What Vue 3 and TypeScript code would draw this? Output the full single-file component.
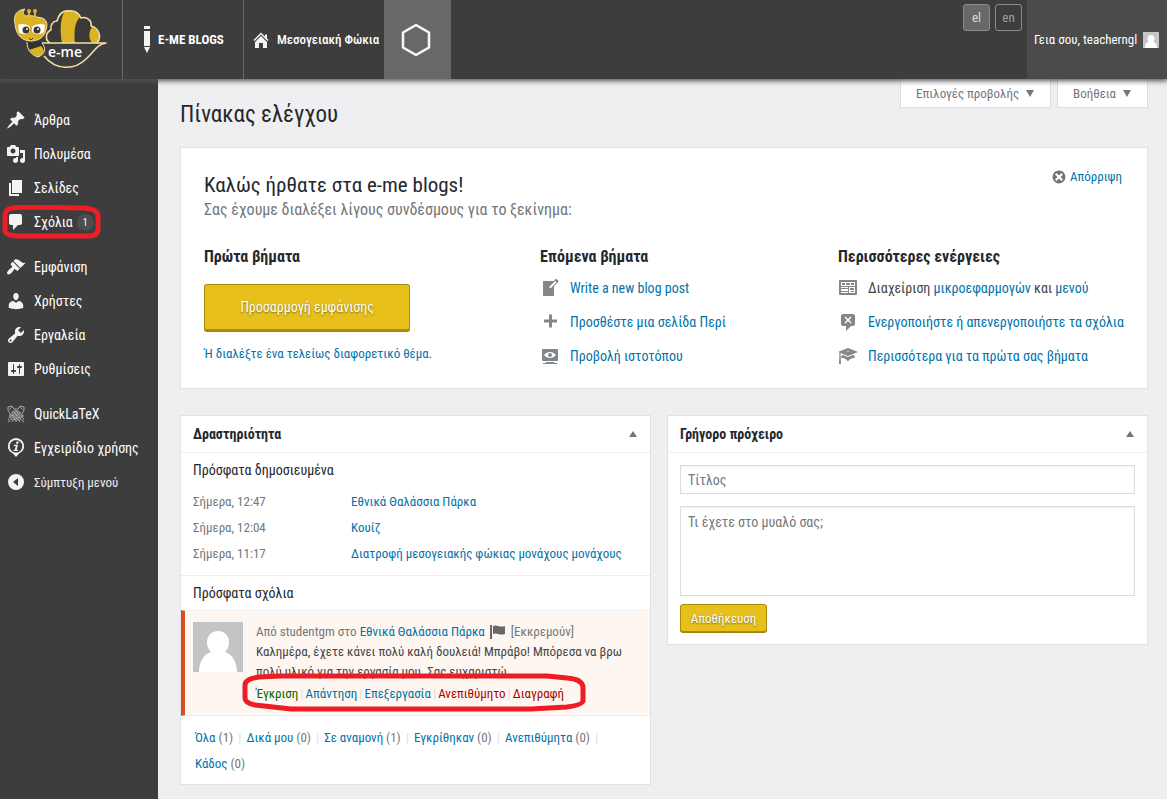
<script setup lang="ts">
import { ref } from 'vue'

interface MenuItem {
  label: string
  icon: string
  count?: number
}

const icons: Record<string, string> = {
  pin: 'M10.44 3.02l1.82-1.82 6.36 6.35-1.83 1.82c-1.05-.68-2.48-.57-3.41.36l-.75.75c-.92.93-1.04 2.35-.35 3.41l-1.83 1.82-2.41-2.41-2.8 2.79c-.42.42-3.38 2.71-3.8 2.29s1.86-3.39 2.28-3.81l2.79-2.79L4.1 9.36l1.83-1.82c1.05.69 2.48.57 3.4-.36l.75-.75c.93-.92 1.05-2.35.36-3.41z',
  media: 'M13 11V4c0-.55-.45-1-1-1h-1.67L9 1H5L3.67 3H2c-.55 0-1 .45-1 1v7c0 .55.45 1 1 1h10c.55 0 1-.45 1-1zM7 4.5c1.38 0 2.5 1.12 2.5 2.5S8.38 9.5 7 9.5 4.5 8.38 4.5 7 5.62 4.5 7 4.5zM14 6h5v10.5c0 1.38-1.12 2.5-2.5 2.5S14 17.88 14 16.5s1.12-2.5 2.5-2.5c.17 0 .34.02.5.05V9h-3V6zm-4 8.05V13h2v3.5c0 1.38-1.12 2.5-2.5 2.5S7 17.88 7 16.5 8.12 14 9.5 14c.17 0 .34.02.5.05z',
  page: 'M6 15V2h10v13H6zm-1 1h8v2H3V5h2v11z',
  comment: 'M5 2h9c1.1 0 2 .9 2 2v7c0 1.1-.9 2-2 2h-2l-5 5v-5H5c-1.1 0-2-.9-2-2V4c0-1.1.9-2 2-2z',
  brush: 'M14.48 11.06L7.41 3.99l1.5-1.5c.5-.56 2.3-.47 3.51.32 1.21.8 1.43 1.28 2.91 2.1 1.18.64 2.45 1.26 4.45.85zm-.71.71L6.7 4.7 4.93 6.47c-.39.39-.39 1.02 0 1.41l1.06 1.06c.39.39.39 1.03 0 1.42-.6.6-1.43 1.11-2.21 1.69-.35.26-.7.53-1.01.84C1.43 14.23.4 16.08 1.4 17.07c.99 1 2.84-.03 4.18-1.36.31-.31.58-.66.85-1.02.57-.78 1.08-1.61 1.69-2.21.39-.39 1.02-.39 1.41 0l1.06 1.06c.39.39 1.02.39 1.41 0z',
  user: 'M10 9.25c-2.27 0-2.73-3.44-2.73-3.44C7 4.02 7.82 2 9.97 2c2.16 0 2.98 2.02 2.71 3.81 0 0-.41 3.44-2.68 3.44zm0 2.57L12.72 10c2.39 0 4.52 2.33 4.52 4.53v2.49s-3.65 1.13-7.24 1.13c-3.65 0-7.24-1.13-7.24-1.13v-2.49c0-2.25 1.94-4.48 4.47-4.48z',
  wrench: 'M16.68 9.77c-1.34 1.34-3.3 1.67-4.95.99l-5.41 6.52c-.99.99-2.59.99-3.58 0s-.99-2.59 0-3.57l6.52-5.42c-.68-1.65-.35-3.61.99-4.95 1.28-1.28 3.12-1.62 4.72-1.06l-2.89 2.89 2.82 2.82 2.86-2.87c.53 1.58.18 3.39-1.08 4.65zM3.81 16.21c.4.39 1.04.39 1.43 0 .4-.4.4-1.04 0-1.43-.39-.4-1.03-.4-1.43 0-.39.39-.39 1.03 0 1.43z',
  sliders: 'M18 16V4c0-.55-.45-1-1-1H3c-.55 0-1 .45-1 1v12c0 .55.45 1 1 1h14c.55 0 1-.45 1-1zM8 11h1c.55 0 1 .45 1 1s-.45 1-1 1H8v1.5c0 .28-.22.5-.5.5s-.5-.22-.5-.5V13H6c-.55 0-1-.45-1-1s.45-1 1-1h1V5.5c0-.28.22-.5.5-.5s.5.22.5.5V11zm5-2h-1c-.55 0-1-.45-1-1s.45-1 1-1h1V5.5c0-.28.22-.5.5-.5s.5.22.5.5V7h1c.55 0 1 .45 1 1s-.45 1-1 1h-1v5.5c0 .28-.22.5-.5.5s-.5-.22-.5-.5V9z',
  info: 'M10 0a8 8 0 0 0-8 8.500c0 4 2.500 5.500 5 7L10 19l3-3.500c2.500-1.500 5-3 5-7A8 8 0 0 0 10 0zm0 2a6.300 6.300 0 1 1 0 12.600A6.300 6.300 0 0 1 10 2zM10.500 3.500h2.200l-.5 2.200H10zM8 6.700h4l-1.300 5h1.400l-.3 1.200H7.500l.3-1.200h1L9.800 7.900H7.700z',
  collapse: 'M10 2a8 8 0 1 1 0 16 8 8 0 0 1 0-16zM7 10l5 4V6z',
  home: 'M16 8.500l1.530 1.530-1.060 1.060L10 4.600l-6.470 6.490-1.060-1.060L10 2.500l4 4v-2h2zm-6-2.460l6 5.990V18h-4v-5H8v5H4v-5.970z',
  write: 'M16.89 1.2l1.41 1.41c.39.39.39 1.02 0 1.41L14 8.33V18H3V3h10.67l1.8-1.8c.4-.39 1.03-.4 1.42 0zm-5.66 8.48l5.37-5.36-1.42-1.42-5.36 5.37-.71 2.12z',
  plus: 'M17 7.500v3h-5v5H9v-5H4v-3h5v-5h3v5z',
  view: 'M18 14V4c0-.55-.45-1-1-1H3c-.55 0-1 .45-1 1v10c0 .55.45 1 1 1h14c.55 0 1-.45 1-1zm-8-8c2.300 0 4.400 1.140 6 3-1.600 1.860-3.700 3-6 3s-4.400-1.140-6-3c1.600-1.860 3.700-3 6-3zm2 3c0-1.100-.9-2-2-2s-2 .9-2 2 .9 2 2 2 2-.9 2-2zm2 8h3v1H3v-1h3v-1h8z',
  widgets: 'M2 2h16a1 1 0 0 1 1 1v13a1 1 0 0 1-1 1H2a1 1 0 0 1-1-1V3a1 1 0 0 1 1-1zM3 4v4h14V4zM4 5h3v2H4zM8 5h4v2H8zM13 5h3v2h-3zM3 9v1h7V9zM3 11v2h7v-2zM3 14v1h7v-1zM11 9v6h6V9zM12 10h4v2h-4zM13 13h3v1h-3z',
  commentOff: 'M5 2h10c1.100 0 2 .9 2 2v8c0 1.100-.9 2-2 2h-2l-5 5v-5H5c-1.100 0-2-.9-2-2V4c0-1.100.9-2 2-2zm8.500 8.500L11 8l2.500-2.500-1-1L10 7 7.500 4.500l-1 1L9 8l-2.500 2.500 1 1L10 9l2.500 2.500z',
  learn: 'M10 10L2.540 7.020 3 18H1l.48-11.410L0 6l10-4 10 4zm0-5c-.55 0-1 .22-1 .5s.45.5 1 .5 1-.22 1-.5-.45-.5-1-.5zm0 6l5.570-2.230c.71.94 1.200 2.070 1.360 3.300-.3-.04-.61-.07-.93-.07-2.550 0-4.780 1.370-6 3.410-1.220-2.040-3.450-3.410-6-3.410-.32 0-.63.03-.93.07.16-1.230.65-2.360 1.360-3.300z',
  dismiss: 'M10 2c4.420 0 8 3.580 8 8s-3.580 8-8 8-8-3.580-8-8 3.580-8 8-8zm5 11l-3-3 3-3-2-2-3 3-3-3-2 2 3 3-3 3 2 2 3-3 3 3z',
}

const menu: MenuItem[][] = [
  [
    { label: 'Άρθρα', icon: 'pin' },
    { label: 'Πολυμέσα', icon: 'media' },
    { label: 'Σελίδες', icon: 'page' },
    { label: 'Σχόλια', icon: 'comment', count: 1 },
  ],
  [
    { label: 'Εμφάνιση', icon: 'brush' },
    { label: 'Χρήστες', icon: 'user' },
    { label: 'Εργαλεία', icon: 'wrench' },
    { label: 'Ρυθμίσεις', icon: 'sliders' },
  ],
  [
    { label: 'QuickLaTeX', icon: 'koala' },
    { label: 'Εγχειρίδιο χρήσης', icon: 'info' },
  ],
]

const nextSteps = [
  { label: 'Write a new blog post', icon: 'write' },
  { label: 'Προσθέστε μια σελίδα Περί', icon: 'plus' },
  { label: 'Προβολή ιστοτόπου', icon: 'view' },
]

const published = [
  { time: 'Σήμερα, 12:47', title: 'Εθνικά Θαλάσσια Πάρκα' },
  { time: 'Σήμερα, 12:04', title: 'Κουίζ' },
  { time: 'Σήμερα, 11:17', title: 'Διατροφή μεσογειακής φώκιας μονάχους μονάχους' },
]

const actions = [
  { label: 'Έγκριση', tone: 'approve' },
  { label: 'Απάντηση', tone: '' },
  { label: 'Επεξεργασία', tone: '' },
  { label: 'Ανεπιθύμητο', tone: 'danger' },
  { label: 'Διαγραφή', tone: 'danger' },
]

const filters = [
  { label: 'Όλα', count: 1 },
  { label: 'Δικά μου', count: 0 },
  { label: 'Σε αναμονή', count: 1 },
  { label: 'Εγκρίθηκαν', count: 0 },
  { label: 'Ανεπιθύμητα', count: 0 },
  { label: 'Κάδος', count: 0 },
]

const title = ref('')
const body = ref('')
</script>

<template>
  <div class="page">
    <header class="topbar">
      <a class="logo" href="#" aria-label="e-me">
        <svg width="96" height="64" viewBox="0 0 96 64">
          <path d="M37 36C32 33 32 26 38 23C37 18 40 14 44 14C46 7 50 3 56 4C61 3 66 6 68 11C74 9 79 14 78 19C86 21 89 30 84 36Z" fill="#3b3836" />
          <path d="M51 5C56 2 63 4 67 10C61 16 61 26 62 36H49C47 25 47 14 51 5Z" fill="#dbb426" />
          <path d="M79 20C86 23 88 30 84 36H79C75 31 76 24 79 20Z" fill="#dbb426" />
          <g fill="none" stroke="#f3dfa6" stroke-width="1.600" stroke-linejoin="round">
            <path d="M37 36C32 33 32 26 38 23C37 18 40 14 44 14C46 7 50 3 56 4C61 3 66 6 68 11C74 9 79 14 78 19C86 21 89 30 84 36" />
            <path d="M29 36H93C84 37 80 46 73 52C62 63 43 64 31 49" />
          </g>
          <path d="M14 35C18 33 24 34 29 36L31 42L23 44C18 42 14 39 14 35Z" fill="#35332f" />
          <path d="M16 43L28 39C32 43 32 47 25 50C21 48 18 46 16 43Z" fill="#dbb426" />
          <path d="M14 35C14 43 18 48 25 50C33 47 33 41 29 36" fill="none" stroke="#f3dfa6" stroke-width="1" />
          <path d="M2 17C0 8 4 3 12 2C9 5 10 8 13 9C17 8 20 9 24 10L29 11C35 13 35 19 32 26C30 31 24 34 18 34C10 34 3 29 2 17Z" fill="#dbb426" stroke="#f3dfa6" stroke-width="1" />
          <path d="M16 11V4M22 11V4" stroke="#dbb426" stroke-width="2" />
          <circle cx="16" cy="4" r="2" fill="#dbb426" /><circle cx="22" cy="4" r="2" fill="#dbb426" />
          <path d="M5 18C9 16 14 17 17 20V24C16 28 8 28 6 25Z" fill="#fff" />
          <path d="M19 20C22 17 28 16 32 18L31 25C28 28 20 28 19 24Z" fill="#fff" />
          <circle cx="13" cy="23" r="3.500" fill="#3b3836" /><circle cx="24" cy="23" r="3.500" fill="#3b3836" />
          <circle cx="14" cy="22" r="1" fill="#fff" /><circle cx="25" cy="22" r="1" fill="#fff" />
          <path d="M16 31l2 2 2-2" fill="none" stroke="#3b3836" />
          <text x="52" y="50" text-anchor="middle" class="logo-text">e-me</text>
        </svg>
      </a>
      <a class="top-item brand" href="#">
        <svg width="8" height="27" viewBox="0 0 8 27" fill="#f5f5f5"><path d="M1 0h6v3H1zM1 5h6v15H1zM1 21h6l-3 6z" /></svg>
        <span>E-ME BLOGS</span>
      </a>
      <a class="top-item site" href="#">
        <svg width="20" height="20" viewBox="0 0 20 20" fill="#f5f5f5"><path :d="icons.home" /></svg>
        <span>Μεσογειακή Φώκια</span>
      </a>
      <button class="hex" type="button" aria-label="Εφαρμογές">
        <svg width="34" height="34" viewBox="0 0 34 34"><path d="M17 2L30 9.500V24.500L17 32L4 24.500V9.500Z" fill="none" stroke="#fafafa" stroke-width="2.500" stroke-linejoin="round" /></svg>
      </button>
      <div class="langs">
        <button type="button" class="lang current">el</button>
        <button type="button" class="lang">en</button>
      </div>
      <a class="account" href="#">
        <span>Γεια σου, teacherngl</span>
        <svg width="16" height="16" viewBox="0 0 50 50"><path fill="#c6c6c6" d="M0 0h50v50H0z" /><path fill="#fff" d="M25 9c7 0 11 5 11 11 0 5-2 8-5 10 8 3 13 10 13 20H6c0-10 5-17 13-20-3-2-5-5-5-10C14 14 18 9 25 9z" /></svg>
      </a>
    </header>

    <div class="frame">
      <nav class="sidebar">
        <ul v-for="(group, g) in menu" :key="g">
          <li v-for="item in group" :key="item.label">
            <a href="#" class="menu-link">
              <svg v-if="item.icon === 'koala'" width="20" height="20" viewBox="0 0 20 20" fill="none" stroke="#aaa8a6" stroke-width="1">
                <path d="M5 9C6 5 14 5 15 9L16 13C14 18 6 18 4 13Z" fill="#777" stroke="none" />
                <path d="M2 3l4-1 2 3h4l2-3 4 1v4l-2 2v4l2 3M2 3v4l2 2v4l-2 3M6 7l3 2 2 3 3-4M5 11l3 1 1 4 3-3 3 1M6 18l2-3M14 18l-2-3M3 12h2M15 12h3M9 6l3 2M6 15l-4 3M14 15l4 3M10 18v-2" />
                <path d="M3 6l3-3M14 3l3 3" stroke="#b98d72" />
              </svg>
              <svg v-else width="20" height="20" viewBox="0 0 20 20" fill="#f3f3f3" fill-rule="evenodd"><path :d="icons[item.icon]" /></svg>
              <span>{{ item.label }}</span>
              <span v-if="item.count" class="count">{{ item.count }}</span>
              <svg v-if="item.count" class="mark mark-menu" width="100" height="36" viewBox="0 0 100 36" aria-hidden="true">
                <path d="M11 3L22 2L82 3Q96 4 96 11V24Q96 31 86 31L14 31Q3 30 3 25V10Q3 4 11 3Z" />
              </svg>
            </a>
          </li>
          <li v-if="g === menu.length - 1">
            <button type="button" class="menu-link collapse">
              <svg width="20" height="20" viewBox="0 0 20 20" fill="#f3f3f3" fill-rule="evenodd"><path :d="icons.collapse" /></svg>
              <span>Σύμπτυξη μενού</span>
            </button>
          </li>
        </ul>
      </nav>

      <main class="content">
        <div class="heading-row">
          <h1>Πίνακας ελέγχου</h1>
          <div class="tabs">
            <button type="button">Επιλογές προβολής <i class="down" /></button>
            <button type="button">Βοήθεια <i class="down" /></button>
          </div>
        </div>

        <section class="card welcome">
          <a class="dismiss" href="#">
            <svg width="16" height="16" viewBox="0 0 20 20" fill="#6f7479" fill-rule="evenodd"><path :d="icons.dismiss" /></svg>Απόρριψη
          </a>
          <h2>Καλώς ήρθατε στα e-me blogs!</h2>
          <p class="about">Σας έχουμε διαλέξει λίγους συνδέσμους για το ξεκίνημα:</p>
          <div class="columns">
            <div>
              <h3>Πρώτα βήματα</h3>
              <button type="button" class="primary hero">Προσαρμογή εμφάνισης</button>
              <p class="alt"><a href="#">Ή διαλέξτε ένα τελείως διαφορετικό θέμα.</a></p>
            </div>
            <div>
              <h3>Επόμενα βήματα</h3>
              <ul class="steps">
                <li v-for="s in nextSteps" :key="s.label">
                  <svg width="20" height="20" viewBox="0 0 20 20" fill-rule="evenodd"><path :d="icons[s.icon]" /></svg>
                  <a href="#">{{ s.label }}</a>
                </li>
              </ul>
            </div>
            <div>
              <h3>Περισσότερες ενέργειες</h3>
              <ul class="steps">
                <li>
                  <svg width="20" height="20" viewBox="0 0 20 20" fill-rule="evenodd"><path :d="icons.widgets" /></svg>
                  <span>Διαχείριση <a href="#">μικροεφαρμογών</a> και <a href="#">μενού</a></span>
                </li>
                <li>
                  <svg width="20" height="20" viewBox="0 0 20 20" fill-rule="evenodd"><path :d="icons.commentOff" /></svg>
                  <a href="#">Ενεργοποιήστε ή απενεργοποιήστε τα σχόλια</a>
                </li>
                <li>
                  <svg width="20" height="20" viewBox="0 0 20 20" fill-rule="evenodd"><path :d="icons.learn" /></svg>
                  <a href="#">Περισσότερα για τα πρώτα σας βήματα</a>
                </li>
              </ul>
            </div>
          </div>
        </section>

        <div class="boxes">
          <section class="card">
            <header class="box-head"><h2>Δραστηριότητα</h2><button type="button" aria-label="Εναλλαγή Δραστηριότητα"><i class="up" /></button></header>
            <div class="published">
              <h3>Πρόσφατα δημοσιευμένα</h3>
              <ul>
                <li v-for="p in published" :key="p.time"><span>{{ p.time }}</span><a href="#">{{ p.title }}</a></li>
              </ul>
            </div>
            <h3 class="recent">Πρόσφατα σχόλια</h3>
            <article class="pending">
              <svg class="avatar" width="50" height="50" viewBox="0 0 50 50"><path fill="#c4c4c4" d="M0 0h50v50H0z" /><path fill="#fff" d="M25 9c7 0 11 5 11 11 0 5-2 8-4 10 7 2 12 10 12 20H6c0-10 5-18 12-20-2-2-4-5-4-10C14 14 18 9 25 9z" /></svg>
              <div class="pending-body">
                <p class="meta">
                  <span>Από studentgm στο <a href="#">Εθνικά Θαλάσσια Πάρκα</a></span>
                  <svg width="16" height="14" viewBox="0 0 16 14" fill="#686868"><path d="M0 0h2v14H0zM3 1c4-2 6 2 12 0v8c-6 2-8-2-12 0z" /></svg>
                  <span>[Εκκρεμούν]</span>
                </p>
                <p class="quote">Καλημέρα, έχετε κάνει πολύ καλή δουλειά! Μπράβο! Μπόρεσα να βρω πολύ υλικό για την εργασία μου. Σας ευχαριστώ</p>
                <p class="actions">
                  <template v-for="(a, i) in actions" :key="a.label"><i v-if="i" class="bar">|</i><a href="#" :class="a.tone">{{ a.label }}</a></template>
                  <svg class="mark mark-actions" width="346" height="40" viewBox="0 0 346 40" aria-hidden="true">
                    <path d="M18 4L40 3H306L326 5Q341 6 342 14V28Q341 32 326 34L290 36H50L14 32Q4 30 4 25V12Q4 6 18 4Z" />
                  </svg>
                </p>
              </div>
            </article>
            <p class="filters">
              <span v-for="(f, i) in filters" :key="f.label"><a href="#">{{ f.label }}</a> ({{ f.count }})<i v-if="i < filters.length - 1" class="bar">|</i></span>
            </p>
          </section>

          <section class="card">
            <header class="box-head"><h2>Γρήγορο πρόχειρο</h2><button type="button" aria-label="Εναλλαγή Γρήγορο πρόχειρο"><i class="up" /></button></header>
            <form class="draft" @submit.prevent>
              <input v-model="title" type="text" aria-label="Τίτλος" placeholder="Τίτλος">
              <textarea v-model="body" aria-label="Περιεχόμενο" placeholder="Τι έχετε στο μυαλό σας;" />
              <button type="submit" class="primary small">Αποθήκευση</button>
            </form>
          </section>
        </div>
      </main>
    </div>
  </div>
</template>

<style>
body {
  margin: 0;
  background: #efeff1;
}
</style>

<style scoped>
* {
  box-sizing: border-box;
}
.page {
  min-height: 100vh;
  display: flex;
  flex-direction: column;
  font-family: "Roboto Condensed", "Liberation Sans Narrow", Roboto, sans-serif;
  font-size: 13px;
  line-height: 20px;
  color: #444;
}
h1, h2, h3, p, ul {
  margin: 0;
  padding: 0;
  font-weight: 400;
}
ul {
  list-style: none;
}
button, input, textarea {
  font-family: inherit;
}
a {
  color: #0073aa;
  text-decoration: none;
}
svg {
  flex: none;
  display: block;
}
i {
  font-style: normal;
}
.topbar {
  height: 79px;
  display: flex;
  background: #3d3d3d;
  box-shadow: 0 1px 5px 1px #555;
  position: relative;
  z-index: 2;
}
.topbar a {
  color: #fff;
}
.logo {
  width: 123px;
  padding: 7px 0 0 13px;
  border-right: 1px solid #686868;
}
.logo svg {
  overflow: visible;
}
.logo-text {
  font: 600 14px "Open Sans", sans-serif;
  fill: #fff;
}
.top-item {
  display: flex;
  align-items: center;
  font-size: 13px;
}
.brand {
  width: 121px;
  padding-left: 20px;
  gap: 7px;
  font-weight: 700;
  border-right: 1px solid #686868;
}
.site {
  width: 140px;
  padding-left: 7px;
  gap: 6px;
  font-weight: 500;
  white-space: nowrap;
}
.hex {
  width: 67px;
  border: 0;
  padding: 0 3px 0 0;
  background: #686868;
  display: flex;
  align-items: center;
  justify-content: center;
}
.langs {
  margin-left: auto;
  padding: 4px 5px 0 0;
  display: flex;
  gap: 5px;
}
.lang {
  width: 27px;
  height: 27px;
  border: 1px solid #8c8c8c;
  border-radius: 3px;
  padding: 0;
  background: #3d3d3d;
  color: #a0a0a0;
  font-size: 13px;
}
.lang.current {
  background: #686868;
  color: #ddd;
}
.account {
  width: 140px;
  padding-left: 7px;
  gap: 6px;
  display: flex;
  align-items: center;
  background: #4b4b4b;
  font-size: 13px;
  white-space: nowrap;
}
.frame {
  flex: 1;
  display: flex;
}
.sidebar {
  width: 158px;
  flex: none;
  padding-top: 24px;
  background: #3d3d3d;
}
.sidebar ul {
  margin-bottom: 11px;
}
.menu-link {
  position: relative;
  width: 100%;
  height: 34px;
  border: 0;
  padding: 0 0 0 6px;
  display: flex;
  align-items: center;
  gap: 8px;
  background: none;
  color: #fff;
  font-size: 14px;
  white-space: nowrap;
}
.collapse {
  color: #eee;
  font-size: 13px;
}
.count {
  width: 17px;
  height: 17px;
  margin-left: -4px;
  border-radius: 9px;
  background: #4e4e4e;
  font-size: 10px;
  line-height: 17px;
  text-align: center;
}
.mark {
  position: absolute;
  fill: none;
  stroke: #ee1c24;
  stroke-width: 5px;
  stroke-linejoin: round;
  pointer-events: none;
}
.mark-menu {
  left: 2px;
  top: 0;
}
.content {
  flex: 1;
  min-width: 0;
  padding: 0 19px 14px 22px;
}
.heading-row {
  height: 68px;
  display: flex;
  justify-content: space-between;
}
h1 {
  padding-top: 21px;
  font-size: 23px;
  line-height: 30px;
  color: #23282d;
}
.tabs {
  display: flex;
  gap: 6px;
}
.tabs button {
  height: 29px;
  border: 1px solid #ddd;
  border-top: 0;
  padding: 0 16px 0 15px;
  display: flex;
  align-items: center;
  gap: 7px;
  background: #fff;
  color: #72777c;
  font-size: 13px;
}
.down, .up {
  display: block;
  border: 4px solid transparent;
}
.down {
  border-top: 7px solid #72777c;
  border-bottom: 0;
}
.up {
  border-bottom: 6px solid #72777c;
  border-top: 0;
}
.card {
  border: 1px solid #e2e2e2;
  background: #fff;
}
.welcome {
  position: relative;
  min-height: 242px;
  padding: 23px 12px 0 23px;
}
.dismiss {
  position: absolute;
  top: 19px;
  right: 25px;
  display: flex;
  align-items: center;
  gap: 3px;
}
.welcome h2 {
  font-size: 21px;
  line-height: 28px;
  color: #23282d;
}
.about {
  font-size: 16px;
  line-height: 22px;
  color: #72777c;
}
.columns {
  margin-top: 25px;
  display: grid;
  grid-template-columns: 336fr 298fr 297fr;
}
.columns h3 {
  font-size: 16px;
  line-height: 22px;
  font-weight: 700;
  color: #23282d;
}
.primary {
  border: 1px solid #a98d12;
  border-radius: 3px;
  background: #e7c01b;
  box-shadow: 0 1px 0 #a08510;
  color: #fff;
  text-shadow: 0 1px 2px #80690a;
}
.hero {
  width: 206px;
  height: 47px;
  margin-top: 16px;
  border-bottom-width: 2px;
  font-size: 14px;
}
.alt {
  margin-top: 13px;
}
.steps {
  margin-top: 3px;
  font-size: 14px;
}
.steps li {
  height: 34px;
  display: flex;
  align-items: center;
  gap: 10px;
  white-space: nowrap;
}
.steps svg {
  fill: #82878c;
}
.boxes {
  margin-top: 26px;
  display: grid;
  grid-template-columns: 471fr 481fr;
  gap: 16px;
  align-items: start;
}
.box-head {
  height: 37px;
  border-bottom: 1px solid #eee;
  padding: 0 13px 0 12px;
  display: flex;
  align-items: center;
  justify-content: space-between;
}
.box-head h2 {
  font-size: 14px;
  font-weight: 700;
  color: #23282d;
}
.box-head button {
  border: 0;
  padding: 0;
  background: none;
}
.published {
  padding: 7px 12px 8px;
  border-bottom: 1px solid #eee;
}
.published h3, .recent {
  font-size: 14px;
  color: #23282d;
}
.published ul {
  margin-top: 9px;
}
.published li {
  height: 26px;
  display: grid;
  grid-template-columns: 150px 1fr;
  gap: 8px;
  align-items: center;
  color: #72777c;
}
.recent {
  padding: 7px 12px;
}
.pending {
  min-height: 106px;
  border-left: 4px solid #d54e21;
  border-top: 1px solid #eee;
  border-bottom: 1px solid #eee;
  padding: 11px 12px 0 8px;
  display: flex;
  gap: 13px;
  background: #fef7f1;
}
.pending-body {
  flex: 1;
  min-width: 0;
}
.meta {
  display: flex;
  align-items: center;
  gap: 5px;
  white-space: nowrap;
  color: #72777c;
}
.quote {
  line-height: 20px;
}
.actions {
  position: relative;
  margin-top: 2px;
  white-space: nowrap;
}
.bar {
  padding: 0 5px;
  color: #ddd;
}
.actions .bar {
  padding: 0 2px;
}
.approve {
  color: #006505;
}
.danger {
  color: #a00;
}
.mark-actions {
  left: -15px;
  top: -11px;
}
.filters {
  padding: 9px 14px 7px;
  display: flex;
  flex-wrap: wrap;
  line-height: 26px;
  white-space: nowrap;
  color: #72777c;
}
.draft {
  padding: 12px;
  display: flex;
  flex-direction: column;
  align-items: stretch;
}
.draft input, .draft textarea {
  border: 1px solid #ddd;
  padding: 0 7px;
  background: #fff;
  color: #32373c;
  font-size: 14px;
  box-shadow: inset 0 1px 2px #f0f0f0;
}
.draft input {
  height: 29px;
}
.draft textarea {
  height: 90px;
  margin-top: 12px;
  padding-top: 5px;
  line-height: 20px;
  resize: none;
}
.draft ::placeholder {
  color: #72777c;
  opacity: 1;
}
.small {
  align-self: flex-start;
  width: 87px;
  height: 28px;
  margin-top: 8px;
  padding: 0;
  font-size: 13px;
}
</style>
